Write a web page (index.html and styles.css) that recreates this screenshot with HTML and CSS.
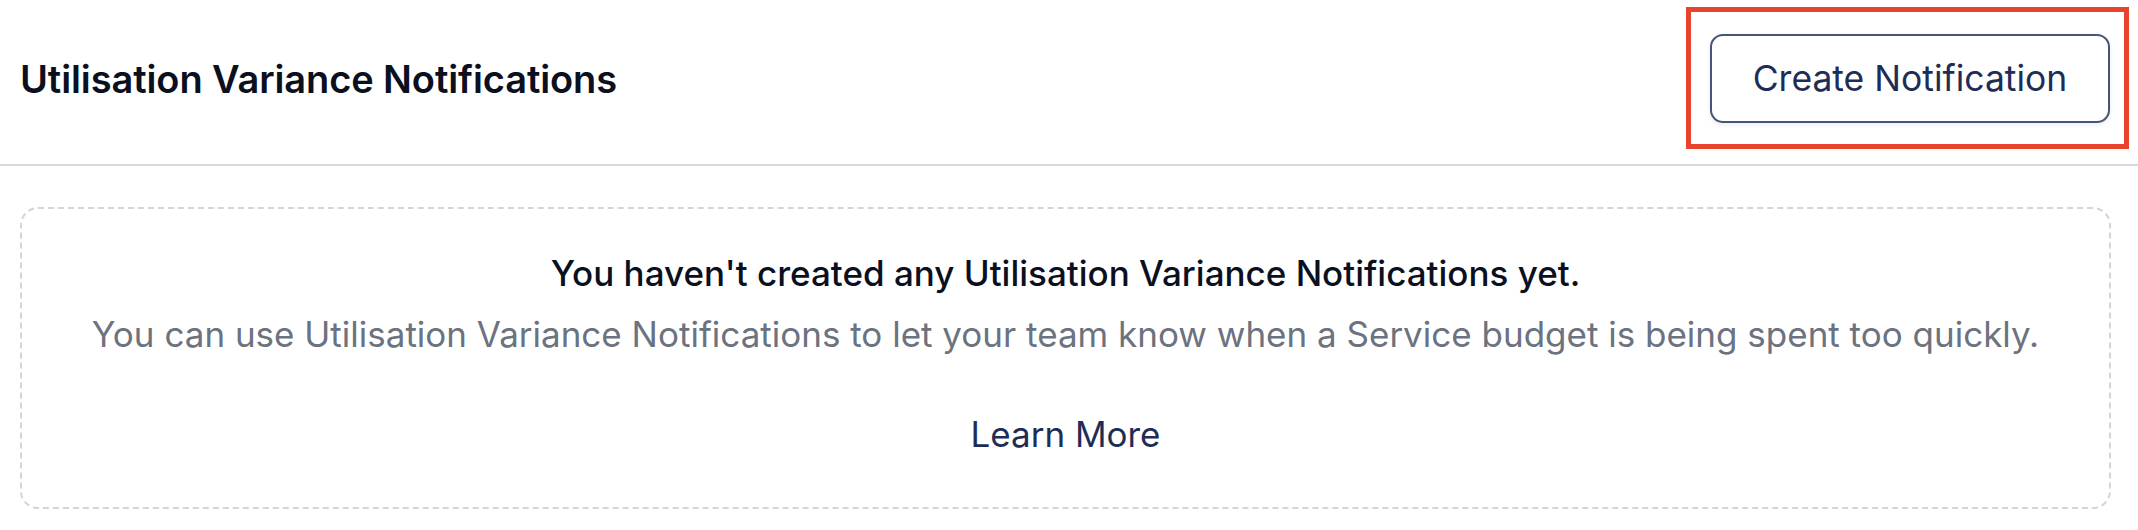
FILE: index.html
```html
<!DOCTYPE html>
<html lang="en">
<head>
<meta charset="utf-8">
<title>Utilisation Variance Notifications</title>
<link rel="stylesheet" href="styles.css">
</head>
<body>
<div class="page">
  <header class="header">
    <h1 class="title">Utilisation Variance Notifications</h1>
    <div class="action">
      <button class="btn" type="button">Create Notification</button>
      <span class="highlight"></span>
    </div>
  </header>
  <main class="content">
    <section class="empty">
      <p class="empty-title">You haven't created any Utilisation Variance Notifications yet.</p>
      <p class="empty-text">You can use Utilisation Variance Notifications to let your team know when a Service budget is being spent too quickly.</p>
      <a class="learn" href="#">Learn More</a>
    </section>
  </main>
</div>
</body>
</html>
```

FILE: styles.css
```css
* { box-sizing: border-box; }
html, body { margin: 0; padding: 0; background: #ffffff; }
body { font-family: "Inter", "Noto Sans", sans-serif; color: #0b1020; }

.page { width: 2138px; height: 530px; overflow: hidden; }

.header {
  display: flex;
  align-items: center;
  justify-content: space-between;
  padding: 34px 28px 41px 20px;
  border-bottom: 2px solid #d6d8dc;
}

.title {
  margin: 0;
  font-size: 38px;
  font-weight: 600;
  color: #0b1020;
  letter-spacing: -0.1px;
}

.action { position: relative; }

.btn {
  display: block;
  width: 400px;
  height: 89px;
  border: 2px solid #46557a;
  border-radius: 13px;
  background: #ffffff;
  box-shadow: 0 2px 4px rgba(16, 24, 40, 0.08);
  font-family: "Inter", "Noto Sans", sans-serif;
  font-size: 35.5px;
  font-weight: 400;
  color: #1e2d55;
  cursor: pointer;
}

.highlight {
  position: absolute;
  left: -24px;
  right: -19px;
  top: -27px;
  bottom: -26px;
  border: 5px solid #e8432d;
  pointer-events: none;
}

.content { padding: 41px 27px 0 20px; }

.empty {
  display: flex;
  flex-direction: column;
  align-items: center;
  text-align: center;
  border: 2px dashed #d3d5da;
  border-radius: 18px;
  padding: 42px 20px 51px;
}

.empty-title {
  margin: 0;
  font-size: 35px;
  line-height: 44px;
  font-weight: 500;
  color: #0b1020;
}

.empty-text {
  margin: 15px 0 0;
  font-size: 35px;
  line-height: 48px;
  font-weight: 400;
  color: #6b7280;
}

.learn {
  margin-top: 54px;
  font-size: 35px;
  line-height: 44px;
  font-weight: 400;
  color: #1e2d55;
  text-decoration: none;
}
```
